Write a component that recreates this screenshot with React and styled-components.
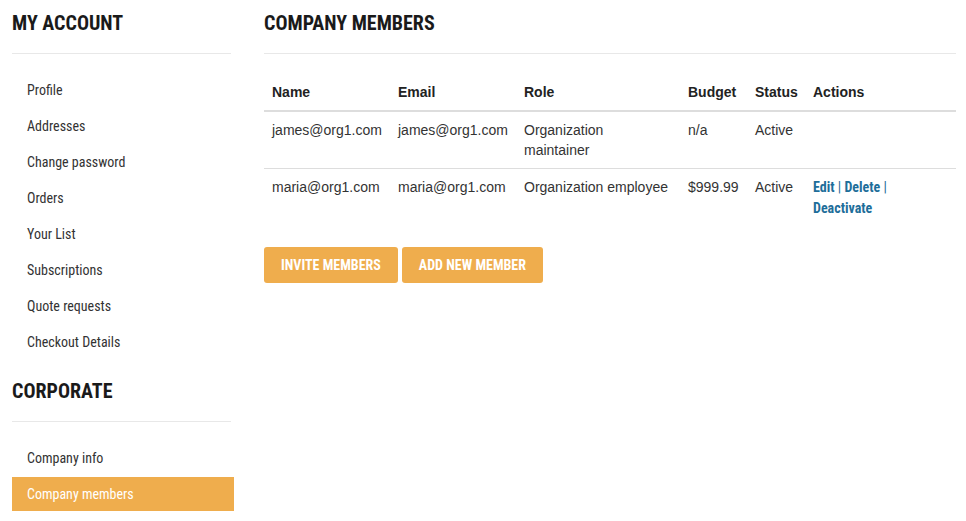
import React from 'react';
import styled, { createGlobalStyle } from 'styled-components';

const GlobalStyle = createGlobalStyle`
  body {
    margin: 0;
    background: #fff;
    font-family: "Liberation Sans", Arial, sans-serif;
    color: #333;
  }
`;

const accountLinks = [
  'Profile',
  'Addresses',
  'Change password',
  'Orders',
  'Your List',
  'Subscriptions',
  'Quote requests',
  'Checkout Details',
];

const corporateLinks = ['Company info', 'Company members'];

const members = [
  { name: 'james@org1.com', email: 'james@org1.com', role: 'Organization maintainer', budget: 'n/a', status: 'Active', editable: false },
  { name: 'maria@org1.com', email: 'maria@org1.com', role: 'Organization employee', budget: '$999.99', status: 'Active', editable: true },
];

const App = () => {
  return (
    <>
      <GlobalStyle />
      <Page>
        <Sidebar>
          <SideTitle>My Account</SideTitle>
          <Menu>
            {accountLinks.map((l) => (
              <MenuItem key={l}>{l}</MenuItem>
            ))}
          </Menu>
          <SideTitle>Corporate</SideTitle>
          <Menu>
            {corporateLinks.map((l) => (
              <MenuItem key={l} $active={l === 'Company members'}>{l}</MenuItem>
            ))}
          </Menu>
        </Sidebar>
        <Main>
          <MainTitle>Company Members</MainTitle>
          <Table>
            <colgroup>
              <col style={{ width: 126 }} />
              <col style={{ width: 126 }} />
              <col style={{ width: 164 }} />
              <col style={{ width: 67 }} />
              <col style={{ width: 58 }} />
              <col />
            </colgroup>
            <thead>
              <tr>
                <Th>Name</Th>
                <Th>Email</Th>
                <Th>Role</Th>
                <Th>Budget</Th>
                <Th>Status</Th>
                <Th>Actions</Th>
              </tr>
            </thead>
            <tbody>
              {members.map((m) => (
                <tr key={m.name}>
                  <Td>{m.name}</Td>
                  <Td>{m.email}</Td>
                  <Td>{m.role}</Td>
                  <Td>{m.budget}</Td>
                  <Td>{m.status}</Td>
                  <Td>
                    {m.editable && (
                      <Actions>
                        <ActionLink href="#">Edit</ActionLink> <Sep>|</Sep> <ActionLink href="#">Delete</ActionLink>{' '}
                        <Sep>|</Sep> <ActionLink href="#">Deactivate</ActionLink>
                      </Actions>
                    )}
                  </Td>
                </tr>
              ))}
            </tbody>
          </Table>
          <ButtonRow>
            <Button>Invite members</Button>
            <Button>Add new member</Button>
          </ButtonRow>
        </Main>
      </Page>
    </>
  );
};

const condensed = `
  font-family: Roboto, sans-serif;
  font-stretch: 75%;
`;

const Page = styled.div`
  display: flex;
  padding: 0 10px 0 12px;
  gap: 30px;
`;

const Sidebar = styled.aside`
  width: 222px;
  flex-shrink: 0;
`;

const SideTitle = styled.h2`
  ${condensed}
  margin: 0 3px 19px 0;
  padding: 11px 0 18px;
  font-weight: 700;
  font-size: 20px;
  line-height: 24px;
  text-transform: uppercase;
  color: #1a1a1a;
  border-bottom: 1px solid #e8e8e8;
`;

const Menu = styled.ul`
  list-style: none;
  margin: 0 0 9px;
  padding: 0;
`;

const MenuItem = styled.li`
  ${condensed}
  height: 34px;
  line-height: 34px;
  margin-bottom: 2px;
  padding-left: 15px;
  font-size: 14px;
  color: ${(p) => (p.$active ? '#fff' : '#333')};
  background: ${(p) => (p.$active ? '#efad4d' : 'transparent')};
`;

const Main = styled.main`
  flex: 1;
`;

const MainTitle = styled.h1`
  ${condensed}
  margin: 0 0 20px;
  padding: 11px 0 18px;
  font-weight: 700;
  font-size: 20px;
  line-height: 24px;
  text-transform: uppercase;
  color: #1a1a1a;
  border-bottom: 1px solid #e8e8e8;
`;

const Table = styled.table`
  width: 100%;
  border-collapse: collapse;
  table-layout: fixed;
  font-size: 14px;
  line-height: 20px;
`;

const Th = styled.th`
  text-align: left;
  font-weight: 700;
  color: #222;
  padding: 8px;
  border-bottom: 2px solid #ddd;
`;

const Td = styled.td`
  vertical-align: top;
  padding: 8px;
  color: #333;
  tbody tr + tr & {
    border-top: 1px solid #ddd;
  }
`;

const Actions = styled.div`
  ${condensed}
  font-weight: 700;
  color: #1e6e9a;
  line-height: 21px;
`;

const ActionLink = styled.a`
  color: #1e6e9a;
  text-decoration: none;
`;

const Sep = styled.span`
  font-weight: 400;
`;

const ButtonRow = styled.div`
  display: flex;
  gap: 4px;
  margin-top: 20px;
`;

const Button = styled.button`
  ${condensed}
  height: 36px;
  padding: 0 17px;
  border: none;
  border-radius: 3px;
  background: #efad4d;
  color: #fff;
  font-weight: 700;
  font-size: 14px;
  text-transform: uppercase;
  cursor: pointer;
`;

export default App;
